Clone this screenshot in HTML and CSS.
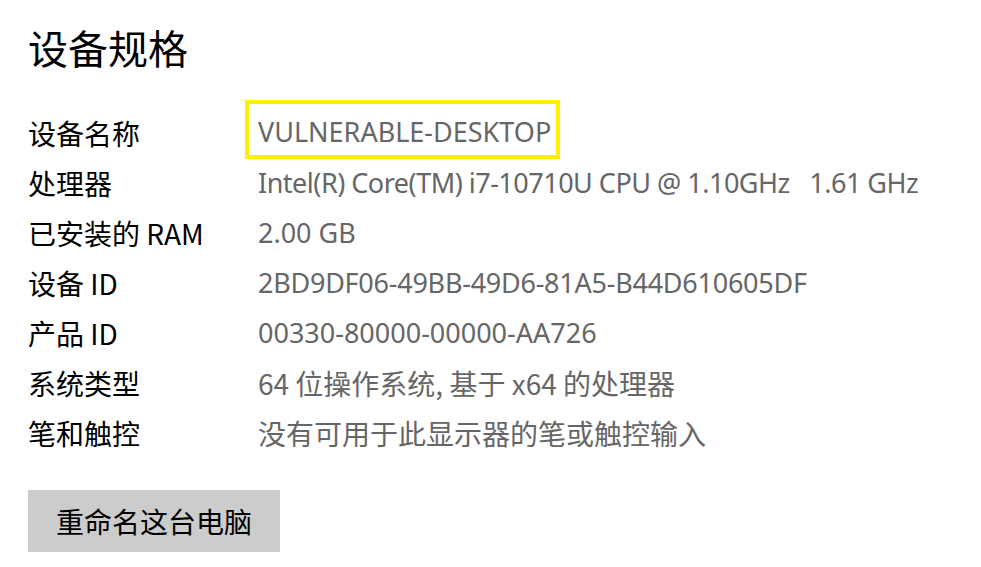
FILE: index.html
```html
<!DOCTYPE html>
<html lang="zh-CN">
<head>
<meta charset="utf-8">
<link rel="stylesheet" href="styles.css">
</head>
<body>
<div class="page">
  <h1 class="title">设备规格</h1>
  <div class="specs">
    <div class="label">设备名称</div><div class="value latin"><span class="highlight">VULNERABLE-DESKTOP</span></div>
    <div class="label">处理器</div><div class="value latin cpu">Intel(R) Core(TM) i7-10710U CPU @ 1.10GHz&nbsp;&nbsp;&nbsp;1.61 GHz</div>
    <div class="label">已安装的 RAM</div><div class="value latin">2.00 GB</div>
    <div class="label">设备 ID</div><div class="value latin tight">2BD9DF06-49BB-49D6-81A5-B44D610605DF</div>
    <div class="label">产品 ID</div><div class="value latin">00330-80000-00000-AA726</div>
    <div class="label">系统类型</div><div class="value">64 位操作系统, 基于 x64 的处理器</div>
    <div class="label">笔和触控</div><div class="value">没有可用于此显示器的笔或触控输入</div>
  </div>
  <button class="rename">重命名这台电脑</button>
</div>
</body>
</html>
```

FILE: styles.css
```css
html, body {
  margin: 0;
  padding: 0;
  background: #ffffff;
}
body {
  font-family: "Noto Sans CJK SC", sans-serif;
  color: #000;
}
.page {
  padding: 18px 0 0 28px;
}
.title {
  margin: 0;
  font-weight: 400;
  font-size: 40px;
  line-height: 58px;
  height: 58px;
}
.specs {
  margin-top: 32px;
  display: grid;
  grid-template-columns: 230px auto;
  font-size: 28px;
  line-height: 50px;
}
.label,
.value {
  height: 50px;
}
.label {
  color: #000;
}
.value {
  color: #666666;
  white-space: nowrap;
}
.latin {
  font-family: "Noto Sans", "Noto Sans CJK SC", sans-serif;
  font-size: 27px;
}
.cpu {
  letter-spacing: -0.5px;
}
.tight {
  letter-spacing: -0.25px;
}
.highlight {
  display: inline-block;
  vertical-align: top;
  border: 4px solid #fff000;
  padding: 5px 5px 0 9px;
  line-height: 46px;
  margin: -8px 0 -1px -13px;
}
.rename {
  display: block;
  margin-top: 32px;
  width: 252px;
  height: 62px;
  border: none;
  background: #cccccc;
  font-family: "Noto Sans CJK SC", sans-serif;
  font-size: 28px;
  color: #000;
  padding: 0;
}
```
